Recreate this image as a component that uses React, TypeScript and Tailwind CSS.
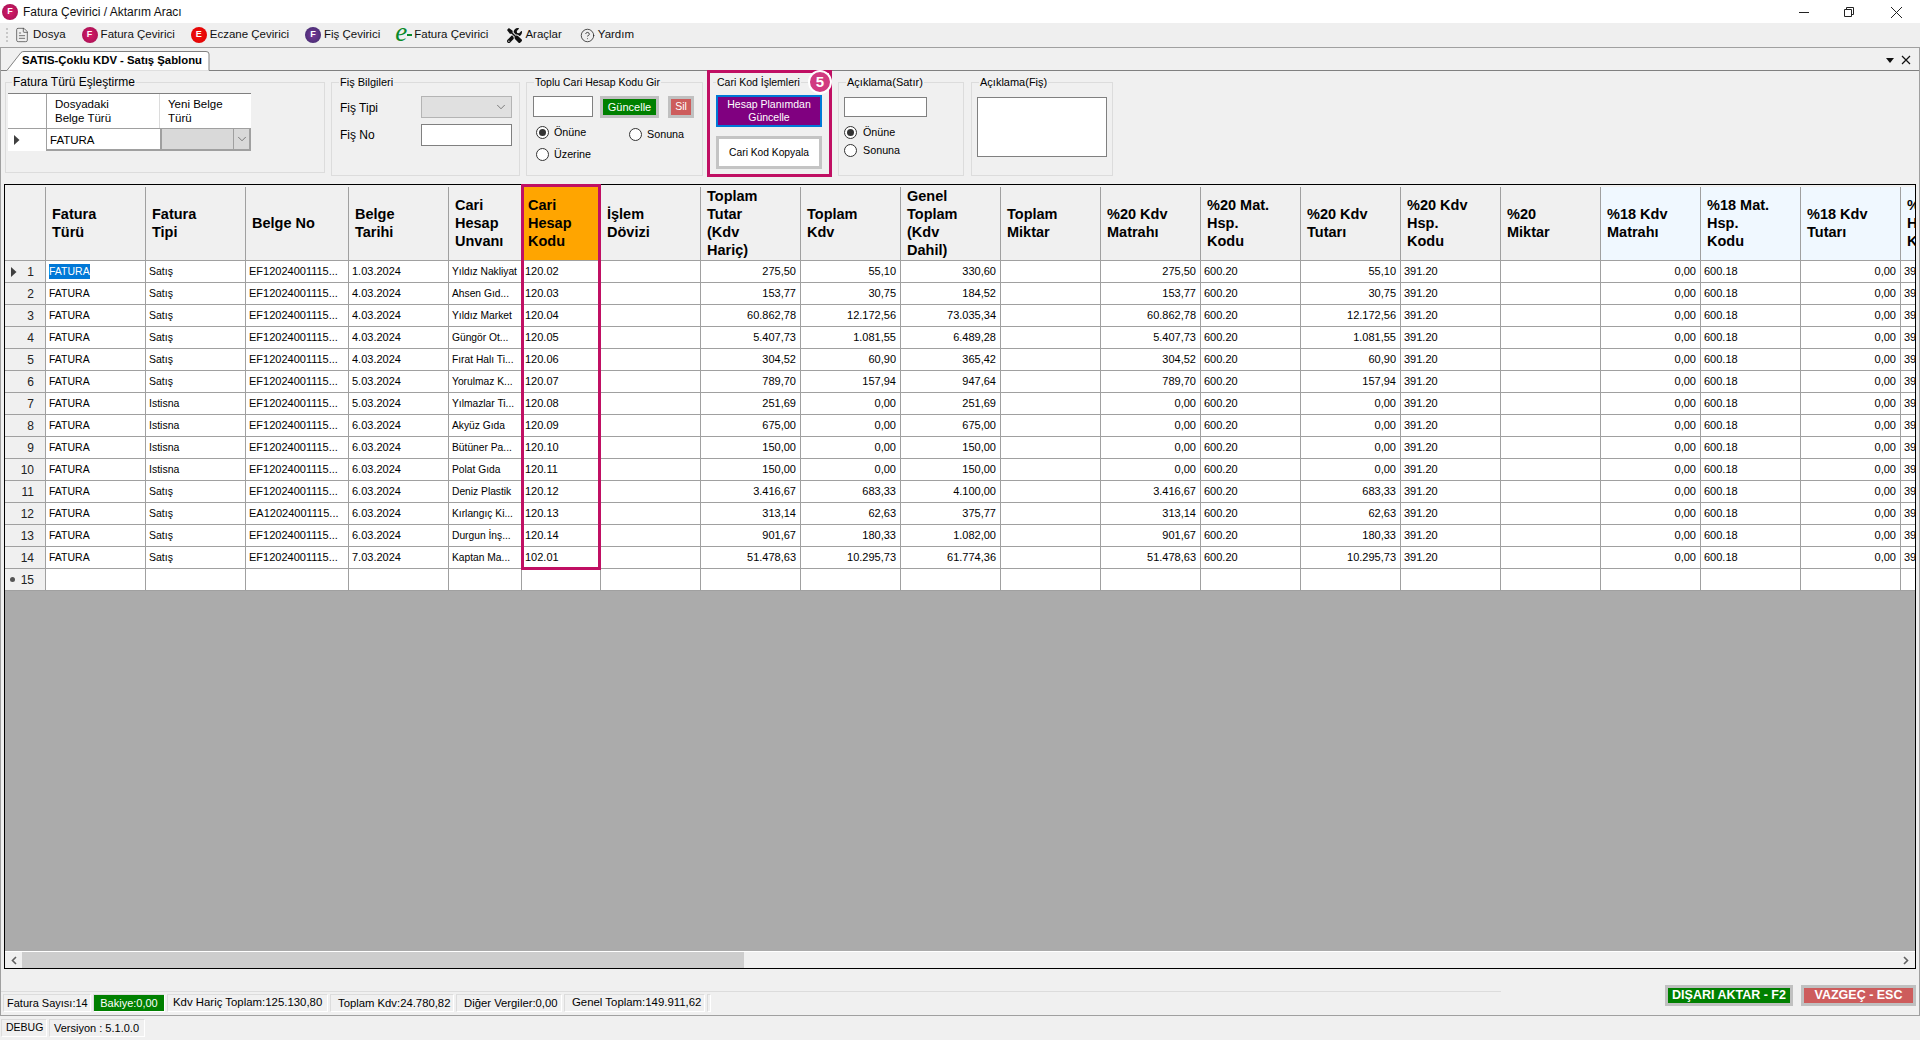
import { ChevronDown, CircleHelp, FileText } from "lucide-react";
import { FaTools } from "react-icons/fa";

type Col = { width: string; header: string; tint?: string; right?: boolean; size?: string };

const columns: Col[] = [
  { width: "w-[100px]", header: "Fatura\nTürü", size: "text-[10.5px]" },
  { width: "w-[100px]", header: "Fatura\nTipi", size: "text-[10.5px]" },
  { width: "w-[103px]", header: "Belge No" },
  { width: "w-[100px]", header: "Belge\nTarihi" },
  { width: "w-[73px]", header: "Cari\nHesap\nUnvanı", size: "text-[10.25px]" },
  { width: "w-[79px]", header: "Cari\nHesap\nKodu", tint: "bg-[#ffa500]" },
  { width: "w-[100px]", header: "İşlem\nDövizi" },
  { width: "w-[100px]", header: "Toplam\nTutar\n(Kdv\nHariç)", right: true },
  { width: "w-[100px]", header: "Toplam\nKdv", right: true },
  { width: "w-[100px]", header: "Genel\nToplam\n(Kdv\nDahil)", right: true },
  { width: "w-[100px]", header: "Toplam\nMiktar" },
  { width: "w-[100px]", header: "%20 Kdv\nMatrahı", right: true },
  { width: "w-[100px]", header: "%20 Mat.\nHsp.\nKodu" },
  { width: "w-[100px]", header: "%20 Kdv\nTutarı", right: true },
  { width: "w-[100px]", header: "%20 Kdv\nHsp.\nKodu" },
  { width: "w-[100px]", header: "%20\nMiktar" },
  { width: "w-[100px]", header: "%18 Kdv\nMatrahı", tint: "bg-[#f0f8ff]", right: true },
  { width: "w-[100px]", header: "%18 Mat.\nHsp.\nKodu", tint: "bg-[#f0f8ff]" },
  { width: "w-[100px]", header: "%18 Kdv\nTutarı", tint: "bg-[#f0f8ff]", right: true },
  { width: "w-[100px]", header: "%18 Kdv\nHsp.\nKodu", tint: "bg-[#f0f8ff]" },
];

// tip, belge, tarih, unvan, kod, tutar, kdv, genel, matrah, kdv tutari
const data = [
  ["Satış", "EF12024001115...", "1.03.2024", "Yıldız Nakliyat", "120.02", "275,50", "55,10", "330,60", "275,50", "55,10"],
  ["Satış", "EF12024001115...", "4.03.2024", "Ahsen Gıd...", "120.03", "153,77", "30,75", "184,52", "153,77", "30,75"],
  ["Satış", "EF12024001115...", "4.03.2024", "Yıldız Market", "120.04", "60.862,78", "12.172,56", "73.035,34", "60.862,78", "12.172,56"],
  ["Satış", "EF12024001115...", "4.03.2024", "Güngör Ot...", "120.05", "5.407,73", "1.081,55", "6.489,28", "5.407,73", "1.081,55"],
  ["Satış", "EF12024001115...", "4.03.2024", "Fırat Halı Ti...", "120.06", "304,52", "60,90", "365,42", "304,52", "60,90"],
  ["Satış", "EF12024001115...", "5.03.2024", "Yorulmaz K...", "120.07", "789,70", "157,94", "947,64", "789,70", "157,94"],
  ["Istisna", "EF12024001115...", "5.03.2024", "Yılmazlar Ti...", "120.08", "251,69", "0,00", "251,69", "0,00", "0,00"],
  ["Istisna", "EF12024001115...", "6.03.2024", "Akyüz Gıda", "120.09", "675,00", "0,00", "675,00", "0,00", "0,00"],
  ["Istisna", "EF12024001115...", "6.03.2024", "Bütüner Pa...", "120.10", "150,00", "0,00", "150,00", "0,00", "0,00"],
  ["Istisna", "EF12024001115...", "6.03.2024", "Polat Gıda", "120.11", "150,00", "0,00", "150,00", "0,00", "0,00"],
  ["Satış", "EF12024001115...", "6.03.2024", "Deniz Plastik", "120.12", "3.416,67", "683,33", "4.100,00", "3.416,67", "683,33"],
  ["Satış", "EA12024001115...", "6.03.2024", "Kırlangıç Ki...", "120.13", "313,14", "62,63", "375,77", "313,14", "62,63"],
  ["Satış", "EF12024001115...", "6.03.2024", "Durgun İnş...", "120.14", "901,67", "180,33", "1.082,00", "901,67", "180,33"],
  ["Satış", "EF12024001115...", "7.03.2024", "Kaptan Ma...", "102.01", "51.478,63", "10.295,73", "61.774,36", "51.478,63", "10.295,73"],
];

function rowCells(d: string[]) {
  return [
    "FATURA", d[0], d[1], d[2], d[3], d[4], "", d[5], d[6], d[7], "",
    d[8], "600.20", d[9], "391.20", "", "0,00", "600.18", "0,00", "391.18",
  ];
}

function Badge({ letter, color }: { letter: string; color: string }) {
  return (
    <span className={`flex h-4 w-4 shrink-0 items-center justify-center rounded-full text-[9px] font-bold text-white ${color}`}>
      {letter}
    </span>
  );
}

function MenuItem({ icon, label, className }: { icon: React.ReactNode; label: string; className: string }) {
  return (
    <div className={`flex items-center gap-[3px] ${className}`}>
      {icon}
      <span className="text-[11.5px] text-[#111]">{label}</span>
    </div>
  );
}

function Radio({ label, checked, gap = "ml-[5px]" }: { label: string; checked?: boolean; gap?: string }) {
  return (
    <div className="flex h-[13px] items-center">
      <span className="flex h-[13px] w-[13px] items-center justify-center rounded-full border border-[#333] bg-white">
        {checked && <span className="h-[7px] w-[7px] rounded-full bg-[#333]" />}
      </span>
      <span className={`text-[10.75px] ${gap}`}>{label}</span>
    </div>
  );
}

function Group({ title, className, titleClass, children }: { title: string; className: string; titleClass?: string; children?: React.ReactNode }) {
  return (
    <fieldset className={`mt-[4px] shrink-0 border border-[#dcdcdc] ${className}`}>
      <legend className={`px-[1px] leading-[14px] ${titleClass ?? "ml-[7px] text-[11px]"}`}>{title}</legend>
      {children}
    </fieldset>
  );
}

function StatusCell({ className, children }: { className: string; children: React.ReactNode }) {
  return (
    <div className={`flex h-[18px] shrink-0 items-center whitespace-nowrap border border-t-[#dcdcdc] border-l-[#dcdcdc] border-r-white border-b-white ${className}`}>
      {children}
    </div>
  );
}

function Arrow() {
  return (
    <svg width="6" height="10" viewBox="0 0 6 10" className="shrink-0">
      <polygon points="0,0 5.5,5 0,10" fill="#404040" />
    </svg>
  );
}

function FilePanels() {
  return (
    <div className="flex h-[113px] shrink-0 items-start pl-[4px]">
      <Group title="Fatura Türü Eşleştirme" titleClass="ml-[6px] text-[12px]" className="h-[98px] w-[320px]">
        <div className="ml-[2px] mt-[4px] w-[243px] border-t border-[#808080]">
          <div className="flex h-[35px] border-b border-[#a0a0a0] bg-white text-[11.5px] leading-[14px]">
            <div className="w-[39px] border-r border-[#a0a0a0]" />
            <div className="flex w-[113px] items-center whitespace-pre-line border-r border-[#dcdcdc] pl-[8px]">{"Dosyadaki\nBelge Türü"}</div>
            <div className="flex w-[91px] items-center whitespace-pre-line pl-[8px]">{"Yeni Belge\nTürü"}</div>
          </div>
          <div className="flex h-[22px] bg-white">
            <div className="flex w-[39px] items-center border-r border-[#a0a0a0] pl-[6px]"><Arrow /></div>
            <div className="flex w-[113px] items-center border-b-2 border-[#a0a0a0] pl-[3px] pt-[3px] text-[11.5px]">FATURA</div>
            <div className="flex w-[91px] items-center justify-end border-2 border-t-0 border-[#a0a0a0] bg-[#d9d9d9]">
              <span className="flex h-full w-[16px] items-center justify-center border-l border-[#a0a0a0]">
                <ChevronDown size={14} strokeWidth={1} color="#333" />
              </span>
            </div>
          </div>
        </div>
      </Group>

      <Group title="Fiş Bilgileri" className="ml-[6px] h-[101px] w-[189px]">
        <div className="ml-[8px] mt-[7px] flex items-center text-[12px]">
          <span className="w-[81px] pt-[1px]">Fiş Tipi</span>
          <div className="flex h-[22px] w-[91px] items-center justify-end border border-[#b4b4b4] bg-[#e0e0e0] pr-[3px]">
            <ChevronDown size={14} strokeWidth={1} color="#333" />
          </div>
        </div>
        <div className="ml-[8px] mt-[6px] flex items-center text-[12px]">
          <span className="w-[81px] pb-[1px]">Fiş No</span>
          <div className="h-[22px] w-[91px] border border-[#808080] bg-white" />
        </div>
      </Group>

      <Group title="Toplu Cari Hesap Kodu Gir" className="ml-[6px] h-[101px] w-[177px]" titleClass="ml-[7px] text-[10.5px]">
        <div className="ml-[6px] mt-[7px] flex items-start">
          <div className="h-[21px] w-[60px] border border-[#808080] bg-white" />
          <div className="ml-[7px] flex h-[22px] w-[59px] items-center justify-center border-[3px] border-[#c0c0c0] bg-[#008000] text-[11px] text-white">Güncelle</div>
          <div className="ml-[9px] flex h-[22px] w-[26px] items-center justify-center border-[3px] border-[#c0c0c0] bg-[#cd5c5c] text-[10.5px] text-white">Sil</div>
        </div>
        <div className="ml-[9px] mt-[8px] flex items-start">
          <div className="flex w-[93px] flex-col gap-[9px]">
            <Radio label="Önüne" checked />
            <Radio label="Üzerine" />
          </div>
          <div className="mt-[2px]">
            <Radio label="Sonuna" />
          </div>
        </div>
      </Group>

      <div className="relative z-10 ml-[4px] -mt-[1px] h-[107px] w-[125px] shrink-0 border-[3px] border-[#c00f63]">
        <fieldset className="ml-[3px] mt-[2px] w-[113px] border-0 border-t border-[#dcdcdc]">
          <legend className="ml-[3px] px-[1px] text-[10.5px] leading-[14px]">Cari Kod İşlemleri</legend>
          <div className="ml-[3px] mt-[6px] flex h-[32px] w-[106px] items-center justify-center border-2 border-[#0078d7] bg-[#800080] text-center text-[10.5px] leading-[13px] text-white">
            Hesap Planımdan<br />Güncelle
          </div>
          <div className="ml-[3px] mt-[9px] flex h-[33px] w-[106px] items-center justify-center border-[3px] border-[#c4c4c4] bg-white pt-[1px] text-[10.25px]">
            Cari Kod Kopyala
          </div>
        </fieldset>
        <div className="absolute left-[98px] top-[-3px] flex h-[24px] w-[24px] items-center justify-center rounded-full border-2 border-white bg-[#d13a80] text-[15px] font-bold text-white">
          5
        </div>
      </div>

      <Group title="Açıklama(Satır)" className="ml-[6px] h-[101px] w-[126px]">
        <div className="ml-[5px] mt-[8px] h-[20px] w-[83px] border border-[#808080] bg-white" />
        <div className="ml-[5px] mt-[9px] flex flex-col gap-[5px]">
          <Radio label="Önüne" checked gap="ml-[6px]" />
          <Radio label="Sonuna" gap="ml-[6px]" />
        </div>
      </Group>

      <Group title="Açıklama(Fiş)" className="ml-[7px] h-[101px] w-[142px]">
        <div className="ml-[5px] mt-[8px] h-[60px] w-[130px] border border-[#808080] bg-white" />
      </Group>
    </div>
  );
}

function InvoiceGrid() {
  return (
    <div className="relative ml-[3px] mr-[3px] flex h-[785px] shrink-0 flex-col border border-black">
      <div className="min-h-0 flex-1 overflow-hidden bg-[#ababab]">
        <div className="flex h-[76px] w-max border-b border-[#a0a0a0] bg-[#f0f0f0]">
          <div className="w-[41px] pt-[2px]">
            <div className="h-full border-r border-[#a0a0a0]" />
          </div>
          {columns.map((col) => (
            <div key={col.header} className={`${col.width} pt-[2px]`}>
              <div className={`flex h-full items-center whitespace-pre-line border-r border-[#a0a0a0] pb-[2px] pl-[6px] text-[14.5px] font-bold leading-[18px] ${col.tint ?? ""}`}>
                {col.header}
              </div>
            </div>
          ))}
        </div>

        {data.map((d, i) => (
          <div key={i} className="flex h-[22px] w-max border-b border-[#a0a0a0] bg-white text-[11px]">
            <div className="flex w-[41px] items-center justify-between border-r border-[#a0a0a0] bg-[#f0f0f0] pl-[6px] pr-[11px] text-[12px] text-[#222]">
              {i === 0 ? <Arrow /> : <span />}
              <span>{i + 1}</span>
            </div>
            {rowCells(d).map((value, c) => {
              const col = columns[c];
              return (
                <div
                  key={c}
                  className={`flex items-center overflow-hidden whitespace-nowrap border-r border-[#a0a0a0] ${col.width} ${col.size ?? ""} ${col.right ? "justify-end pr-[4px]" : "pl-[3px]"}`}
                >
                  {i === 0 && c === 0 ? <span className="bg-[#0078d7] text-white">{value}</span> : value}
                </div>
              );
            })}
          </div>
        ))}

        <div className="flex h-[22px] w-max border-b border-[#a0a0a0] bg-white">
          <div className="flex w-[41px] items-center justify-between border-r border-[#a0a0a0] bg-[#f0f0f0] pl-[5px] pr-[11px] text-[12px] text-[#222]">
            <span className="h-[5px] w-[5px] rounded-full bg-[#555]" />
            <span>15</span>
          </div>
          {columns.map((col) => (
            <div key={col.header} className={`border-r border-[#a0a0a0] ${col.width}`} />
          ))}
        </div>
      </div>

      <div className="flex h-[17px] shrink-0 border-t border-white bg-[#f0f0f0]">
        <div className="flex w-[17px] items-center justify-center">
          <svg width="6" height="9" viewBox="0 0 6 9"><path d="M5 1 1.5 4.5 5 8" fill="none" stroke="#606060" strokeWidth="1.6" /></svg>
        </div>
        <div className="h-full w-[722px] bg-[#cdcdcd]" />
        <div className="flex-1" />
        <div className="flex w-[18px] items-center justify-center">
          <svg width="6" height="9" viewBox="0 0 6 9"><path d="M1 1 4.5 4.5 1 8" fill="none" stroke="#606060" strokeWidth="1.6" /></svg>
        </div>
      </div>

      {/* highlight over the Cari Hesap Kodu column */}
      <div className="pointer-events-none absolute left-[516px] top-[-1px] h-[386px] w-[80px] border-[3px] border-[#c00f63]" />
    </div>
  );
}

export default function App() {
  return (
    <div className="flex h-[1040px] w-[1920px] flex-col overflow-hidden bg-[#f0f0f0] font-['Liberation_Sans',Arial,sans-serif] text-black">
      {/* title bar */}
      <div className="flex h-[23px] shrink-0 items-center bg-white pl-[2px]">
        <Badge letter="F" color="bg-[radial-gradient(circle,#d81b6a,#a01050)]" />
        <span className="ml-[5px] text-[12px] text-[#111]">Fatura Çevirici / Aktarım Aracı</span>
        <div className="flex-1" />
        <svg width="104" height="14" viewBox="0 0 104 14" className="mr-[17px]" fill="none" stroke="#222" strokeWidth="1">
          <path d="M0 7.5H10" />
          <path d="M45.5 4.5h7v7h-7zM47.5 4.5v-2h7v7h-2" />
          <path d="M92 2l11 11M103 2 92 13" />
        </svg>
      </div>

      {/* menu */}
      <div className="flex h-[24px] shrink-0 items-center bg-[#efefef]">
        <div className="ml-[6px] flex w-[2px] flex-col gap-[2px]">
          <span className="h-[2px] w-[2px] bg-[#c8c8c8]" />
          <span className="h-[2px] w-[2px] bg-[#c8c8c8]" />
          <span className="h-[2px] w-[2px] bg-[#c8c8c8]" />
          <span className="h-[2px] w-[2px] bg-[#c8c8c8]" />
        </div>
        <MenuItem className="ml-[6px]" icon={<FileText size={16} strokeWidth={1} color="#333" />} label="Dosya" />
        <MenuItem className="ml-[16px]" icon={<Badge letter="F" color="bg-[radial-gradient(circle,#d81b6a,#a01050)]" />} label="Fatura Çevirici" />
        <MenuItem className="ml-[16px]" icon={<Badge letter="E" color="bg-[radial-gradient(circle,#f01010,#e00000)]" />} label="Eczane Çevirici" />
        <MenuItem className="ml-[16px]" icon={<Badge letter="F" color="bg-[radial-gradient(circle,#7a3a9a,#3a2a6a)]" />} label="Fiş Çevirici" />
        <MenuItem
          className="ml-[15px]"
          icon={
            <span className="flex h-[20px] w-[16px] items-center overflow-visible">
              <span className="-translate-y-[3px] font-['Liberation_Serif',serif] text-[27px] italic leading-[20px] text-[#0a8a2a]">e</span>
              <span className="h-[2px] w-[5px] shrink-0 bg-[#0a8a2a]" />
            </span>
          }
          label="Fatura Çevirici"
        />
        <MenuItem className="ml-[19px]" icon={<FaTools size={15} color="#111" />} label="Araçlar" />
        <MenuItem className="ml-[18px]" icon={<CircleHelp size={15} strokeWidth={1.25} color="#222" />} label="Yardım" />
      </div>

      <div className="flex h-[969px] shrink-0 flex-col border border-[#a0a0a0]">
        {/* tab strip */}
        <div className="flex h-[23px] shrink-0 items-end border-b border-[#808080]">
          <div className="relative -mb-[1px] ml-[5px] flex h-[20px] w-[204px] items-center pl-[16px]">
            <svg width="204" height="20" viewBox="0 0 204 20" className="absolute left-0 top-0">
              <path d="M0.5 20 L15 1.5 Q16 .5 18 .5 H200 Q203 .5 203 3 V20 Z" fill="#fff" stroke="#808080" />
              <path d="M1 20h202" stroke="#fff" />
            </svg>
            <span className="relative whitespace-nowrap text-[11.35px] font-bold">SATIS-Çoklu KDV - Satış Şablonu</span>
          </div>
          <div className="flex-1" />
          <div className="mb-[5px] mr-[8px] flex items-center gap-[7px]">
            <svg width="8" height="5" viewBox="0 0 8 5"><polygon points="0,0 8,0 4,5" fill="#111" /></svg>
            <svg width="10" height="10" viewBox="0 0 10 10"><path d="M1 1l8 8M9 1 1 9" stroke="#111" strokeWidth="1.2" /></svg>
          </div>
        </div>

        <FilePanels />
        <InvoiceGrid />

        {/* totals and actions */}
        <div className="flex min-h-0 flex-1">
          <div className="mt-[22px] w-[1500px] border-t border-[#dcdcdc] pl-[2px] pt-[2px]">
            <div className="flex gap-[2px]">
              <StatusCell className="w-[88px] pl-[3px] text-[11px]">Fatura Sayısı:14</StatusCell>
              <StatusCell className="w-[72px] justify-center bg-[#008000] text-[11px] text-white">Bakiye:0,00</StatusCell>
              <StatusCell className="w-[161px] pl-[5px] text-[11.4px]">Kdv Hariç Toplam:125.130,80</StatusCell>
              <StatusCell className="w-[124px] pl-[7px] text-[11.3px]">Toplam Kdv:24.780,82</StatusCell>
              <StatusCell className="w-[106px] pl-[7px] text-[11.3px]">Diğer Vergiler:0,00</StatusCell>
              <StatusCell className="w-[141px] pl-[7px] text-[11.4px]">Genel Toplam:149.911,62</StatusCell>
              <StatusCell className="w-[4px] text-[11px]"> </StatusCell>
            </div>
          </div>
          <div className="flex-1" />
          <div className="mr-[3px] mt-[16px] flex gap-[8px]">
            <div className="flex h-[21px] w-[128px] items-center justify-center border-[3px] border-[#c0c0c0] bg-[#008000] text-[12.5px] font-bold text-white">DIŞARI AKTAR - F2</div>
            <div className="flex h-[21px] w-[115px] items-center justify-center border-[3px] border-[#c0c0c0] bg-[#cd5c5c] text-[12.5px] font-bold text-white">VAZGEÇ - ESC</div>
          </div>
        </div>
      </div>

      {/* status bar */}
      <div className="flex flex-1 items-start gap-[2px] pl-[1px] pt-[3px]">
        <StatusCell className="w-[46px] pl-[4px] text-[10.5px]">DEBUG</StatusCell>
        <StatusCell className="w-[96px] pl-[4px] text-[11px]">Versiyon : 5.1.0.0</StatusCell>
      </div>
    </div>
  );
}
